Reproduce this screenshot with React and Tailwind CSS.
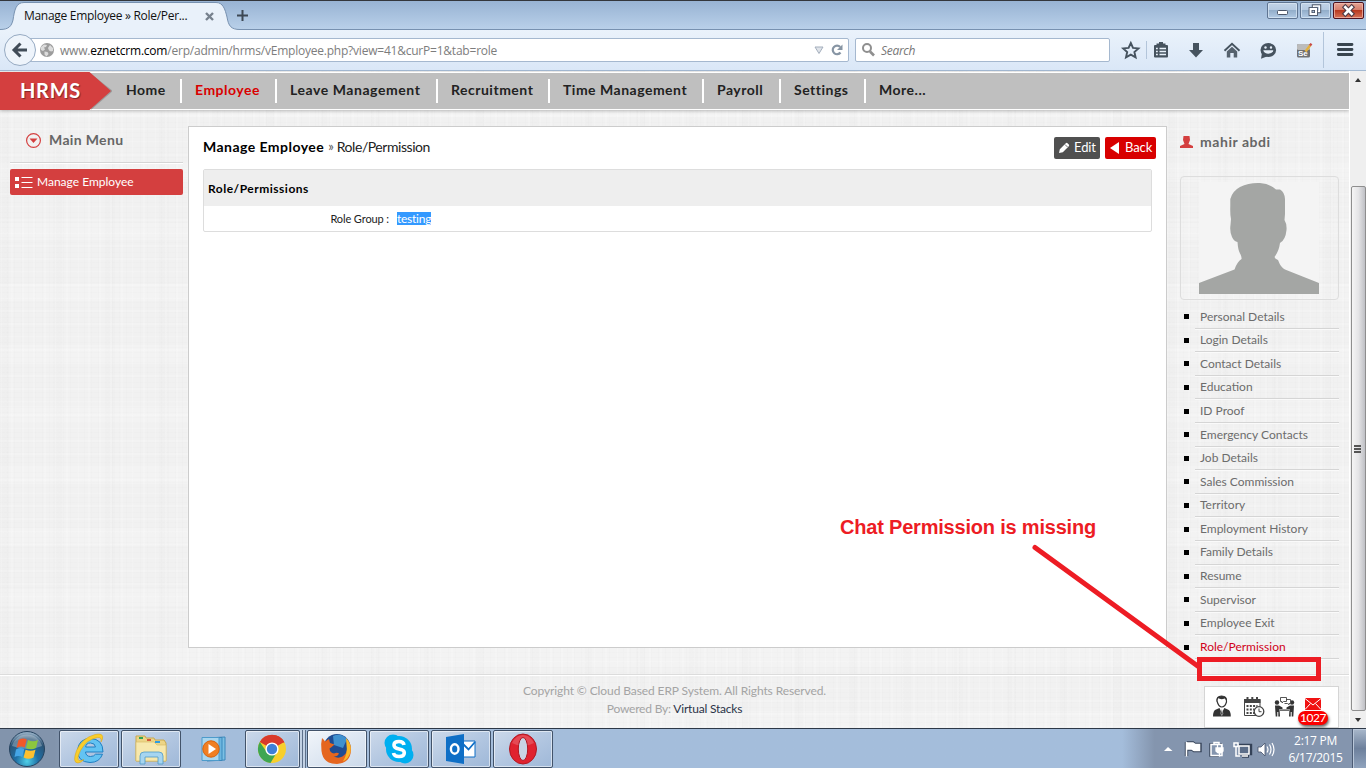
import React from "react";

const TEX =
  "bg-[#f1f1f1] bg-[repeating-linear-gradient(90deg,rgba(0,0,0,0.009)_0px,rgba(0,0,0,0.009)_1px,transparent_1px,transparent_7px),repeating-linear-gradient(90deg,rgba(255,255,255,0.16)_0px,rgba(255,255,255,0.16)_2px,transparent_2px,transparent_11px),repeating-linear-gradient(90deg,rgba(0,0,0,0.008)_0px,rgba(0,0,0,0.008)_9px,transparent_9px,transparent_53px),repeating-linear-gradient(0deg,rgba(0,0,0,0.009)_0px,rgba(0,0,0,0.009)_1px,transparent_1px,transparent_5px),repeating-linear-gradient(0deg,rgba(255,255,255,0.16)_0px,rgba(255,255,255,0.16)_2px,transparent_2px,transparent_13px),repeating-linear-gradient(0deg,rgba(255,255,255,0.15)_0px,rgba(255,255,255,0.15)_17px,transparent_17px,transparent_61px)]";

function WindowButtons() {
  return (
    <svg width="100" height="20" viewBox="1266 0 100 20" className="block">
      <defs>
        <linearGradient id="wb" x1="0" y1="0" x2="0" y2="1">
          <stop offset="0" stopColor="#c3d4e8" /><stop offset=".48" stopColor="#b4c9e1" />
          <stop offset=".5" stopColor="#93aeca" /><stop offset="1" stopColor="#b4cce6" />
        </linearGradient>
        <linearGradient id="wr" x1="0" y1="0" x2="0" y2="1">
          <stop offset="0" stopColor="#e5a596" /><stop offset=".48" stopColor="#d67c6a" />
          <stop offset=".5" stopColor="#b8391f" /><stop offset="1" stopColor="#d9765c" />
        </linearGradient>
      </defs>
      <rect x="1267.500" y="2.500" width="30" height="16" rx="1.500" fill="url(#wb)" stroke="#5f7592" />
      <rect x="1268.500" y="3.500" width="28" height="14" rx="1" fill="none" stroke="#dce8f5" strokeOpacity=".7" />
      <rect x="1300.500" y="2.500" width="30" height="16" rx="1.500" fill="url(#wb)" stroke="#5f7592" />
      <rect x="1301.500" y="3.500" width="28" height="14" rx="1" fill="none" stroke="#dce8f5" strokeOpacity=".7" />
      <rect x="1333.500" y="2.500" width="30" height="16" rx="1.500" fill="url(#wr)" stroke="#4d1220" />
      <rect x="1334.500" y="3.500" width="28" height="14" rx="1" fill="none" stroke="#f2bfb3" strokeOpacity=".7" />
      <rect x="1277.500" y="10.500" width="10" height="4" rx="1" fill="#fff" stroke="#4b5568" />
      <rect x="1313.500" y="6" width="6" height="5.500" fill="#b4c9e1" stroke="#4b5568" strokeWidth="3.400" />
      <rect x="1313.500" y="6" width="6" height="5.500" fill="#b4c9e1" stroke="#fff" strokeWidth="1.400" />
      <rect x="1310.500" y="9" width="5.500" height="5" fill="#b4c9e1" stroke="#4b5568" strokeWidth="3.800" />
      <rect x="1310.500" y="9" width="5.500" height="5" fill="#4b5568" stroke="#fff" strokeWidth="2" />
      <rect x="1312.500" y="10.800" width="1.600" height="1.400" fill="#b4c9e1" />
      <path d="M1345.300 7.200l6.400 6.600M1351.700 7.200l-6.400 6.600" stroke="#4d3a45" strokeWidth="4.800" strokeLinecap="square" />
      <path d="M1345.300 7.200l6.400 6.600M1351.700 7.200l-6.400 6.600" stroke="#fff" strokeWidth="2.600" strokeLinecap="square" />
    </svg>
  );
}

function TabStrip() {
  return (
    <div className="flex h-[30px] border-t border-[#33363b] bg-linear-to-b from-[#98b3d3] to-[#bad1ea]">
      <div className="relative h-[29px] w-[232px]">
        <svg width="240" height="29" viewBox="0 1 240 29" className="absolute left-0 top-0">
          <path d="M0 29.500C9 29.500 11.500 26 13 20C14.500 10 16 2.500 24 2.500H216C223 2.500 225 9 227 17C228.500 26 231 29.500 240 29.500V31H0Z" fill="#e9f1fa" stroke="#7791b0" />
        </svg>
        <div className="relative flex h-full items-center pl-6 pt-px font-['Open_Sans',sans-serif] text-[12px] tracking-[-0.3px] text-[#111]">
          <span className="w-[181px] whitespace-nowrap">Manage Employee » Role/Per...</span>
          <svg width="9" height="9" viewBox="0 0 9 9"><path d="M1 1l7 7M8 1l-7 7" stroke="#76818d" strokeWidth="2.400" /></svg>
        </div>
      </div>
      <div className="flex h-[29px] flex-1 items-center border-b border-[#7791b0] pl-[5px]">
        <svg width="11" height="11" viewBox="0 0 11 11"><path d="M5.500 0v11M0 5.500h11" stroke="#3d4854" strokeWidth="2" /></svg>
      </div>
      <div className="h-[29px] border-b border-[#7791b0]"><div className="-mt-px"><WindowButtons /></div></div>
    </div>
  );
}

function ToolbarIcons() {
  return (
    <svg width="246" height="40" viewBox="1120 30 246 40" className="block">
      <path d="M1130.800 43l2.200 4.900 5.400.5-4 3.600 1.200 5.300-4.800-2.700-4.800 2.700 1.200-5.300-4-3.600 5.400-.5z" fill="none" stroke="#46535f" strokeWidth="1.900" />
      <path d="M1146.500 41v18" stroke="#b3c5da" />
      <rect x="1154" y="45" width="14" height="12.500" rx="1" fill="#46535f" />
      <path d="M1156.500 43.500h9v2h-9zM1159 42h4v2h-4z" fill="#46535f" />
      <path d="M1156 48.500h1.800M1159.500 48.500h6.500M1156 51.500h1.800M1159.500 51.500h6.500M1156 54.500h1.800M1159.500 54.500h6.500" stroke="#e8f1fa" strokeWidth="1.600" />
      <path d="M1193 43h6v7h4l-7 7.500-7-7.500h4z" fill="#46535f" />
      <path d="M1224.500 50.800l7.500-7 7.500 7" fill="none" stroke="#46535f" strokeWidth="1.900" />
      <path d="M1226.800 51.500l5.200-4.700 5.200 4.700v6h-3.500v-4.500h-3.400v4.500h-3.500z" fill="#56626e" />
      <ellipse cx="1268.300" cy="50" rx="7.800" ry="7" fill="#46535f" />
      <path d="M1262 53l-1 5.800 6.500-2.500z" fill="#46535f" />
      <circle cx="1265.500" cy="47.500" r="1.200" fill="#e6eff9" /><circle cx="1271" cy="47.500" r="1.200" fill="#e6eff9" />
      <path d="M1263.300 50.300h10c-.5 4.600-9.500 4.600-10 0z" fill="#e6eff9" />
      <rect x="1297" y="44" width="13" height="13.500" rx="1.500" fill="#6e7073" />
      <rect x="1297" y="44" width="13" height="6" rx="1.500" fill="#bbb" />
      <text x="1298" y="55.500" fontSize="8" fontWeight="700" fill="#fff" fontFamily="Liberation Sans">Se</text>
      <path d="M1305.500 51.500l5-6.500" stroke="#e3b03c" strokeWidth="2.400" /><path d="M1310 45.500l1.400-1.900" stroke="#c84a45" strokeWidth="2.400" />
      <path d="M1323.500 32v36" stroke="#b3c5da" />
      <path d="M1338.300 44.500h13.700M1338.300 49.500h13.700M1338.300 54.500h13.700" stroke="#39454f" strokeWidth="2.800" strokeLinecap="round" />
    </svg>
  );
}

function Toolbar() {
  return (
    <div className="flex h-[41px] items-center border-b border-[#a3b9d2] bg-linear-to-b from-[#eaf2fb] to-[#dae7f7] font-['Open_Sans',sans-serif] text-[12px]">
      <svg width="36" height="34" viewBox="0 33 36 34" className="relative z-10 -mr-[9px] block shrink-0">
        <circle cx="20" cy="50" r="15.500" fill="#eef4fb" stroke="#96aac2" />
        <path d="M27 50H15M20.500 43.500L14 50l6.500 6.500" fill="none" stroke="#414c58" strokeWidth="3" />
      </svg>
      <div className="flex h-6 w-[822px] shrink-0 items-center rounded-r-[2px] border border-[#a5b8cf] bg-white">
        <svg width="14" height="14" viewBox="0 0 14 14" className="ml-[12px] shrink-0">
          <circle cx="7" cy="7" r="7" fill="#9c9c9c" />
          <path d="M1 4l3-2.500 3 .5-1 2-2 .5 1 2-2 1.500-2-1zM8 5l2-3 3 3v3l-2 .5-2-1zM4.500 8.500l3 .5 1 2-2 2.500-2-2z" fill="#dcdcdc" />
        </svg>
        <span className="ml-[6px] flex-1 whitespace-nowrap pt-[2px] tracking-[-0.22px] text-[#7d7d7d]">www.<span className="text-black">eznetcrm.com</span>/erp/admin/hrms/vEmployee.php?view=41&amp;curP=1&amp;tab=role</span>
        <svg width="30" height="14" viewBox="0 0 30 14" className="mr-1">
          <path d="M1 4h8l-4 6.500z" fill="#dfe3e9" stroke="#a4afbd" />
          <path d="M26.200 4A4.300 4.300 0 1 0 26.500 9.500" fill="none" stroke="#8795a4" strokeWidth="2.200" />
          <path d="M28.500 1.500v5.500h-5.500z" fill="#8795a4" />
        </svg>
      </div>
      <div className="ml-[6px] flex h-6 w-[255px] shrink-0 items-center rounded-[2px] border border-[#a5b8cf] bg-white">
        <svg width="13" height="14" viewBox="0 0 13 14" className="ml-[6px]"><circle cx="5" cy="5" r="4" fill="none" stroke="#8f8f8f" strokeWidth="2" /><path d="M8 8.500l4 4" stroke="#8f8f8f" strokeWidth="2.600" /></svg>
        <span className="ml-[6px] pt-[2px] italic tracking-[-0.3px] text-[#777]">Search</span>
      </div>
      <div className="ml-auto"><ToolbarIcons /></div>
    </div>
  );
}

function NavItem({ w, label, active, last }) {
  return (
    <div className={`${w} flex h-6 items-center pb-[3px] ${last ? "" : "border-r-2 border-white"} ${active ? "text-[#d90000]" : "text-[#222]"}`}>
      <span className="whitespace-nowrap">{label}</span>
    </div>
  );
}

function Nav() {
  return (
    <div className="flex h-[38px] shrink-0 items-center border-y border-white bg-[#bfbfbf] font-[Lato,sans-serif] text-[14px] font-bold tracking-[0.5px] shadow-[0_1px_3px_rgba(0,0,0,0.25)]">
      <div className="relative -my-px flex h-[38px] w-[112px] items-center">
        <svg width="112" height="38" viewBox="0 0 112 38" className="absolute left-0 top-0">
          <path d="M90 1l23 18-22 19z" fill="#000" fillOpacity=".18" />
          <path d="M0 0h89.500l21.500 19-21.500 19H0z" fill="#d43f3f" />
        </svg>
        <span className="relative pb-[2px] pl-5 text-[20px] tracking-[0.7px] text-white [text-shadow:1px_1px_1px_rgba(0,0,0,0.4)]">HRMS</span>
      </div>
      <NavItem w="w-[70px] pl-[14px]" label="Home" />
      <NavItem w="w-[95px] pl-[13px]" label="Employee" active />
      <NavItem w="w-[161px] pl-[13px] tracking-[0.56px]" label="Leave Management" />
      <NavItem w="w-[112px] pl-[13px]" label="Recruitment" />
      <NavItem w="w-[154px] pl-[13px]" label="Time Management" />
      <NavItem w="w-[77px] pl-[13px]" label="Payroll" />
      <NavItem w="w-[85px] pl-[13px]" label="Settings" />
      <NavItem w="w-[80px] pl-[13px]" label="More..." last />
    </div>
  );
}

function LeftMenu() {
  return (
    <div className="w-[188px] pl-[10px] pt-[16px]">
      <div className="flex h-[37px] w-[173px] border-b border-[#d5d5d5] pl-4 shadow-[0_1px_0_#fff]">
        <svg width="15" height="15" viewBox="0 0 15 15" className="mt-[7px]"><circle cx="7.500" cy="7.500" r="6.900" fill="none" stroke="#d43f3f" strokeWidth="1.200" /><path d="M3.500 5.500h8l-4 4.500z" fill="#d43f3f" /></svg>
        <span className="ml-2 mt-1 text-[14px] font-bold leading-5 tracking-[0.35px] text-[#666]">Main Menu</span>
      </div>
      <div className="mt-[6px] flex h-[26px] w-[173px] items-center rounded-[2px] bg-[#d43f3f] pl-[5px] text-[12px] text-white">
        <svg width="18" height="11" viewBox="0 0 18 11"><path d="M0 0h4v4H0zM0 7h4v4H0zM6.500 0h11v1h-11zM6.500 5h11v1h-11zM6.500 10h11v1h-11z" fill="#fff" /></svg>
        <span className="ml-1">Manage Employee</span>
      </div>
    </div>
  );
}

function Panel() {
  return (
    <div className="mt-[16px] h-[522px] w-[979px] border border-[#ccc] bg-white pl-[14px] pr-[10px] pt-[10px]">
      <div className="flex h-[22px] items-center">
        <span className="pb-[3px] text-[14px] font-bold tracking-[0.46px] text-black">Manage Employee</span>
        <span className="ml-1 pb-[3px] text-[13px] text-[#555]">»</span>
        <span className="ml-[3px] pb-[3px] text-[14px] tracking-[-0.45px] text-[#222]">Role/Permission</span>
        <div className="ml-auto flex gap-[5px] text-[13px] tracking-[-0.1px] text-white">
          <div className="flex h-[22px] w-[46px] items-center rounded-[2px] bg-[#505050] pl-1">
            <svg width="12" height="12" viewBox="0 0 12 12"><path d="M1 11l.8-3.800 6-6q.8-.8 1.700 0l1.300 1.300q.8.800 0 1.700l-6 6z" fill="#fff" /><path d="M7 2.500l2.500 2.500" stroke="#505050" strokeWidth=".8" /></svg>
            <span className="ml-1">Edit</span>
          </div>
          <div className="flex h-[22px] w-[51px] items-center rounded-[2px] bg-[#d80000] pl-[5px]">
            <svg width="9" height="12" viewBox="0 0 9 12"><path d="M9 0v12L0 6z" fill="#fff" /></svg>
            <span className="ml-[6px]">Back</span>
          </div>
        </div>
      </div>
      <div className="mt-[10px] h-[63px] w-[949px] rounded-[2px] border border-[#ddd] text-[12px] text-black">
        <div className="flex h-9 items-center bg-[#eee] pl-[4px] pt-[2px] font-bold tracking-[0.5px]">Role/Permissions</div>
        <div className="flex h-[25px] items-center text-[11px]">
          <span className="w-[185px] pt-px text-right tracking-[-0.1px] text-[#222]">Role Group :</span>
          <span className="ml-2 bg-[#3399ff] text-[12px] leading-[13px] tracking-[-0.25px] text-white">testing</span>
        </div>
      </div>
    </div>
  );
}

const LINKS = ["Personal Details", "Login Details", "Contact Details", "Education", "ID Proof", "Emergency Contacts", "Job Details", "Sales Commission", "Territory", "Employment History", "Family Details", "Resume", "Supervisor", "Employee Exit", "Role/Permission"];

function Profile() {
  return (
    <div className="flex-1 pl-[13px]">
      <div className="flex h-[66px] items-start pt-[22px]">
        <svg width="13" height="12" viewBox="0 0 13 12" className="mt-[4px]"><path d="M3.500 0h6l.5 4-1.500 4 4.500 2v2H0v-2l4.500-2L3 4z" fill="#d43f3f" /></svg>
        <span className="ml-[7px] text-[14px] font-bold leading-5 tracking-[0.55px] text-[#666]">mahir abdi</span>
      </div>
      <div className="flex h-[124px] w-[159px] justify-center rounded-[4px] border border-[#ddd] pr-px pt-[5px]">
        <svg width="120" height="112" viewBox="0 0 120 112" className="block">
          <rect width="120" height="112" fill="#f4f4f4" />
          <path d="M0 112V101L35.500 87.500Q38 80 42.500 77Q43 75 41 71.500Q39 68 38.500 60Q35 59.500 33 55Q30.500 49 31.500 43L32 37Q31 33 31.300 24V17Q33.500 9 41 5Q50 .500 61 1Q70 1.500 77 7.500H81Q85.500 10 86 17V32L85.500 38Q88 42 87.500 48Q86.500 58 81 61Q80 69 75.500 75Q76 77 79 78Q82 86 86 87.500L91 89.500L120 101V112Z" fill="#a4a6a4" />
        </svg>
      </div>
      <ul className="mt-[5px]">
        {LINKS.map((l) => (
          <li key={l} className="flex h-[23.600px] items-center pl-[4px]">
            <span className="mr-[6px] h-[5px] w-[5px] bg-black" />
            <span className={`flex h-full w-[144px] items-center border-b border-[#d5d5d5] pl-[5px] pt-[0.500px] text-[12px] shadow-[0_1px_0_#fafafa] ${l === "Role/Permission" ? "text-[#d0021b]" : "text-[#6c6c6c]"}`}>{l}</span>
          </li>
        ))}
      </ul>
    </div>
  );
}

function Footer() {
  return (
    <div className="relative flex h-[54px] flex-col items-center border-t border-[#dcdcdc] pt-[7px] text-[12px] leading-[18px] tracking-[-0.1px] text-[#a4a4a4] shadow-[inset_0_1px_0_#fff]">
      <div>Copyright © Cloud Based ERP System. All Rights Reserved.</div>
      <div className="tracking-[-0.2px]">Powered By: <span className="text-[#2b3348]">Virtual Stacks</span></div>
      <div className="absolute right-[10px] top-[11px] h-[42px] w-[135px] border border-[#d5d5d5] bg-white">
        <svg width="133" height="40" viewBox="1205 687 133 40" className="block">
          <path d="M1217 701q-.500-4.500 4.500-5 5.500 0 5 6-1.500 5-4.700 5T1217 701z" fill="#fff" stroke="#333" strokeWidth="1.200" />
          <path d="M1216.800 702q-1.300-6 5-6 6 .500 5 6-1-3-2-3.500-4 1.500-7-.500z" fill="#333" />
          <path d="M1213 716.500q0-6 3-7l3.500-1.500 2.300 5 2.500-5 3.500 1.500q3 1 3 7z" fill="#333" /><path d="M1221.800 708.500l1 5-1 2-1-2z" fill="#333" stroke="#fff" strokeWidth=".5" />
          <path d="M1244.500 699.500h15.500v16h-15.500z" fill="#fff" stroke="#444" /><path d="M1244 699h16.500v4h-16.500z" fill="#444" />
          <path d="M1247.500 697v4M1252.300 697v4M1257 697v4" stroke="#444" strokeWidth="2" />
          <path d="M1246.500 706h11M1246.500 709.500h8M1246.500 713h8" stroke="#444" strokeWidth="2" strokeDasharray="2 1.300" />
          <circle cx="1259" cy="711.500" r="4.800" fill="#fff" stroke="#444" strokeWidth="1.300" /><path d="M1259 708.500v3.200h2.500" fill="none" stroke="#444" />
          <circle cx="1277" cy="702.500" r="2.200" fill="#333" /><circle cx="1292" cy="702.500" r="2.200" fill="#333" />
          <path d="M1275 705.500h4l3.500 2v1.500h-3l.5 7.500h-1.700v-4.500h-1v4.500h-1.600zM1294 705.500h-4l-3.500 2v1.500h3l-.5 7.500h1.700v-4.500h1v4.500h1.600z" fill="#333" />
          <path d="M1280 709.500h9v1.200h-9z" fill="#333" />
          <path d="M1280.500 697.500h6v4h-3l-1.500 1.500v-1.500h-1.500zM1286 699.500h4.500v4h-1.500v1.300l-1.500-1.300h-3" fill="#fff" stroke="#444" strokeWidth=".9" />
          <path d="M1305 698h16v12h-16z" fill="#f01212" /><path d="M1305 698.500l8 6.500 8-6.500M1305 709.500l5.500-6M1321 709.500l-5.500-6" fill="none" stroke="#fff" />
        </svg>
        <div className="absolute left-[93px] top-[24px] flex h-[14px] w-[30px] items-center justify-center rounded-full bg-[#fa0000] text-[12px] leading-none tracking-[-0.4px] text-white shadow-[1px_2px_3px_rgba(0,0,0,0.6)]">1027</div>
      </div>
    </div>
  );
}

function Scrollbar() {
  return (
    <div className="flex w-[17px] flex-col items-center border-l border-white bg-[#efefef]">
      <div className="flex h-[17px] items-center"><svg width="6" height="4" viewBox="0 0 6 4"><path d="M0 4l3-4 3 4z" fill="#333" /></svg></div>
      <div className="mt-[98px] flex h-[525px] w-[15px] flex-col items-center justify-center gap-px rounded-[2px] border border-[#8e8e8e] bg-linear-to-r from-[#f5f5f5] via-[#e4e4e6] to-[#bfc0c5] pr-[2px]">
        <span className="h-[2px] w-[7px] bg-[#555]" /><span className="h-[2px] w-[7px] bg-[#555]" /><span className="h-[2px] w-[7px] bg-[#555]" />
      </div>
      <div className="flex flex-1 items-center"><svg width="6" height="4" viewBox="0 0 6 4"><path d="M0 0l3 4 3-4z" fill="#333" /></svg></div>
    </div>
  );
}

function TaskButton({ w, active, children }) {
  return (
    <div className={`${w} flex h-[38px] items-center justify-center rounded-[2px] border border-[#42536a] shadow-[inset_0_0_0_1px_rgba(255,255,255,0.55)] ${active ? "bg-linear-to-br from-[#f1f5fa] to-[#cbd9ea]" : "bg-linear-to-br from-[#ccd9ea] via-[#b3c7e1] to-[#9fb8d8]"}`}>{children}</div>
  );
}

function Taskbar() {
  return (
    <div className="flex h-10 items-center border-t border-[#2d3847] bg-linear-to-r from-[#8294ac] from-4% via-[#a4bddb] via-8% to-[#a4bddb]">
      <div className="w-[59px] pl-2">
        <svg width="38" height="38" viewBox="0 0 38 38" className="block">
          <defs><radialGradient id="orb" cx=".5" cy=".85" r=".8"><stop offset="0" stopColor="#4fd0e8" /><stop offset=".4" stopColor="#1f6fa5" /><stop offset=".8" stopColor="#2c5475" /><stop offset="1" stopColor="#8ea9c0" /></radialGradient></defs>
          <circle cx="19" cy="19" r="17.500" fill="url(#orb)" stroke="#26435f" />
          <path d="M4 16a15.500 15.500 0 0 1 30 0q-14 6-30 0z" fill="#fff" fillOpacity=".28" />
          <path d="M10.500 10Q15 7.500 18.700 9.500L16.700 17.500Q13 15.500 8.500 18Z" fill="#f1592a" />
          <path d="M20 10Q25 12.500 30 10L28 18Q23 20.500 18 18Z" fill="#8cc63f" />
          <path d="M8 19.500Q12.500 17 16.300 19L14.300 27Q10.500 25 6.500 27Z" fill="#45a5e5" />
          <path d="M17.600 19.700Q22.500 22 27.500 19.700L25.500 27.500Q20.500 30 15.600 27.500Z" fill="#fdc02f" />
        </svg>
      </div>
      <TaskButton w="w-[60px]">
        <svg width="32" height="32" viewBox="0 0 32 32"><path d="M30 19H12.500Q13 23.500 17.500 23.500 21 23.500 22.500 21.200H29.500Q26.500 29.500 17 29.500 4.500 29 4.500 17.500 5.500 5.500 17.500 5.500 30 6 30 19ZM12.700 14H22.500Q22 10 17.500 10T12.700 14Z" fill="#63c3f2" stroke="#1f7fc2" strokeWidth="1" /><path d="M5 30Q-1 30 3.500 17.500 9 5 22 1.500 31 -.5 29.500 6L28 9Q29 4 24.500 4.500 14 6 7.500 17.500 3.500 26 6 27.500 8 28 11 26.500 8.500 29.500 5 30Z" fill="#f9cd2b" stroke="#d9a010" strokeWidth=".5" /></svg>
      </TaskButton>
      <TaskButton w="ml-[2px] w-[60px]">
        <svg width="34" height="32" viewBox="0 0 34 32"><path d="M2 3h9l1 2h8l1 2h9l2 3v18H2z" fill="#edd587" stroke="#c8a951" /><path d="M5 4h4v2H5z" fill="#31a354" /><path d="M13 6h4v2h-4z" fill="#d45a3a" /><path d="M21 8h5v2h-5z" fill="#2f9de0" /><path d="M2 9h18l3 3h9v16H2z" fill="#f7e8ad" stroke="#d9bd68" strokeWidth=".7" /><path d="M6 31V23q0-4 4-4h15q4 0 4 4v8h-5v-7H11v7z" fill="#a6d5f0" stroke="#4f9bc7" strokeWidth=".8" /></svg>
      </TaskButton>
      <div className="flex w-[64px] justify-center pl-[2px]">
        <svg width="30" height="28" viewBox="0 0 30 28"><path d="M8 3l18-1v23L8 26z" fill="#7cc0e4" stroke="#3b88bb" /><path d="M5 2.500h18v23H5z" fill="#6db6df" stroke="#3b88bb" /><path d="M3 2.500h17v23H3z" fill="#a9d6ee" stroke="#4d9bcb" /><circle cx="12" cy="14" r="8.200" fill="#f07f22" stroke="#d8620b" /><path d="M9.500 9v10l7.500-5z" fill="#fff" /></svg>
      </div>
      <TaskButton w="w-[55px]">
        <svg width="30" height="30" viewBox="0 0 30 30" className="-ml-[2px]"><circle cx="15" cy="15" r="14" fill="#f7cf2c" /><path d="M15 15L2.800 8A14 14 0 0 1 27.200 8z" fill="#d93a2c" /><path d="M15 1A14 14 0 0 1 27.500 8.500H15z" fill="#d93a2c" /><path d="M2.800 8A14 14 0 0 0 13.500 29L19.500 19 9 17z" fill="#3ea652" /><circle cx="15" cy="15" r="6.600" fill="#fff" /><circle cx="15" cy="15" r="5.200" fill="#3e7fd8" /></svg>
      </TaskButton>
      <div className="h-[38px] w-[3px] border-r border-[#5d708a] bg-[#c2d1e4]" /><div className="mr-px h-[38px] w-[3px] border-r border-[#5d708a] bg-[#c2d1e4]" />
      <TaskButton w="w-[60px]" active>
        <svg width="32" height="32" viewBox="0 0 32 32" className="-ml-[2px]"><circle cx="17" cy="14.500" r="13.500" fill="#1f4c92" /><path d="M13 3Q21-.5 27 6L23 15 14 12Z" fill="#3f91cf" /><path d="M2 5Q4 6.500 5 8.500L9 6 10 10 14.500 11.500 11 14.500 9.500 15.500Q10 20 14 20.500 17 19 19 20.500 17.500 24 13.500 23.500 21 27 26 20 29 13 26.500 6 31 10 31 17 30.500 30 17 31 3 31 1.500 18 .5 11 2 5Z" fill="#e5661f" /><path d="M26 5Q32 11 30.500 19 28.500 26 23 28.500 28 20 26.500 12Z" fill="#f9b827" /></svg>
      </TaskButton>
      <TaskButton w="ml-[2px] w-[60px]">
        <svg width="32" height="32" viewBox="0 0 32 32"><circle cx="10" cy="10" r="8.500" fill="#00aff0" /><circle cx="22" cy="22" r="8.500" fill="#00aff0" /><circle cx="16" cy="16" r="13" fill="#00aff0" /><path d="M21 12q-.5-3.500-5-3.500-5 0-5 3.600 0 3 5 3.900 5.300 1 5.300 3.800 0 3.700-5.300 3.700-5 0-5.500-3.500" fill="none" stroke="#fff" strokeWidth="3.600" /></svg>
      </TaskButton>
      <TaskButton w="ml-[2px] w-[60px]">
        <svg width="32" height="32" viewBox="0 0 32 32"><path d="M17 8h13v16H17z" fill="#fff" stroke="#0f6fc6" /><path d="M17 10l6.500 6.500L30 9" fill="none" stroke="#0f6fc6" strokeWidth="1.800" /><path d="M1 4l18-3v30L1 28z" fill="#0f6fc6" /><ellipse cx="9.700" cy="16" rx="3.800" ry="4.700" fill="none" stroke="#fff" strokeWidth="2.400" /></svg>
      </TaskButton>
      <TaskButton w="ml-[2px] w-[60px]">
        <svg width="30" height="32" viewBox="0 0 30 32"><ellipse cx="15" cy="16" rx="13.500" ry="15" fill="#e0222f" stroke="#b01822" /><path d="M4 10q4-8 11-8t11 8q-11 6-22 0z" fill="#fff" fillOpacity=".18" /><ellipse cx="15" cy="16" rx="4.700" ry="11.500" fill="#c9d4e4" stroke="#b01822" /></svg>
      </TaskButton>
      <div className="flex h-full flex-1 items-center justify-end bg-linear-to-r from-transparent from-70% to-[#8495ae] to-74% font-['Open_Sans',sans-serif] text-[12px] leading-[17px] text-white">
        <svg width="112" height="24" viewBox="1163 737 112 24" className="mr-[13px] block">
          <path d="M1164 751l4-4 4.500 4z" fill="#fff" />
          <g fill="none" stroke="#344257" strokeWidth="3.400"><path d="M1186.500 742v14M1187 743h6l2 1.500h5v6h-6l-2-1.500h-5" /><path d="M1222 745h-11v10h8M1240.500 745.500h10v8h-10zM1242 756h7" /></g>
          <path d="M1186.500 742v14.500M1187 743h6l2 1.500h4.500v6h-5.500l-2-1.500h-5" fill="#fff" stroke="#fff" strokeWidth="1.600" />
          <path d="M1214 742.500h5v2h-5zM1211 744.500h11v11h-11z" fill="#8495ae" stroke="#fff" strokeWidth="1.500" />
          <path d="M1216 748h7v3q-3.500 4-7 0zM1217.500 745v3M1221.500 745v3M1219.500 752v4.500" fill="#fff" stroke="#fff" strokeWidth="1.300" />
          <path d="M1239 746h10v8h-10zM1242 756h6" fill="#5c6e89" stroke="#fff" strokeWidth="1.500" /><path d="M1234 743h4v3.500h-4zM1236 747v9h4" fill="none" stroke="#fff" strokeWidth="1.500" />
          <path d="M1258 747h3l4-4v13l-4-4h-3z" fill="#fff" stroke="#445269" strokeWidth=".8" /><path d="M1267 746.500q2 3 0 6M1269.500 744.500q3 5 0 10M1272 743q4 6.500 0 13" fill="none" stroke="#fff" strokeWidth="1.200" />
        </svg>
        <div className="mr-[9px] w-[55px] whitespace-nowrap text-center tracking-[-0.3px]"><div>2:17 PM</div><div>6/17/2015</div></div>
        <div className="h-full w-[14px] border-l border-[#4b5b74] bg-linear-to-b from-[#a9b8cb] via-[#6d809c] to-[#90a3bd] shadow-[inset_1px_1px_0_#b9c7d9]" />
      </div>
    </div>
  );
}

export default function App() {
  return (
    <div className="relative flex h-[768px] w-[1366px] flex-col overflow-hidden">
      <TabStrip />
      <Toolbar />
      <div className="flex h-[657px]">
        <div className={`flex w-[1349px] flex-col pt-px font-[Lato,sans-serif] ${TEX}`}>
          <Nav />
          <div className="flex h-[564px]"><LeftMenu /><Panel /><Profile /></div>
          <Footer />
        </div>
        <Scrollbar />
      </div>
      <Taskbar />
      <div className="absolute left-[840px] top-[515px] whitespace-nowrap font-['Liberation_Sans',Arial,sans-serif] text-[20px] font-bold leading-6 tracking-[-0.2px] text-[#ed1c24]">Chat Permission is missing</div>
      <svg width="300" height="150" viewBox="1030 540 300 150" className="pointer-events-none absolute left-[1030px] top-[540px]">
        <path d="M1035 547.500L1199 667" stroke="#ed1c24" strokeWidth="5" strokeLinecap="round" />
        <rect x="1199.500" y="659.500" width="119" height="19" fill="none" stroke="#ed1c24" strokeWidth="5" />
      </svg>
    </div>
  );
}
